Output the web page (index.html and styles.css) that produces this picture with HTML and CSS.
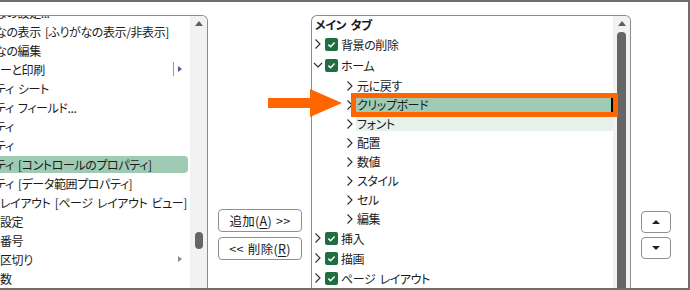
FILE: index.html
```html
<!DOCTYPE html>
<html lang="ja">
<head>
  <meta charset="UTF-8" />
  <title>リボンのユーザー設定</title>
  <link rel="stylesheet" href="styles.css">
</head>
<body>
  <div class="frame">
    <div class="listbox commands">
      <ul class="list">
        <li class="item cut">なの設定...</li>
        <li class="item cut">なの表示 [ふりがなの表示/非表示]</li>
        <li class="item cut">なの編集</li>
        <li class="item">ーと印刷<span class="sub-mark blue"></span></li>
        <li class="item cut">ティ シート</li>
        <li class="item cut">ティ フィールド...</li>
        <li class="item cut">ティ</li>
        <li class="item cut">ティ</li>
        <li class="item cut selected">ティ [コントロールのプロパティ]</li>
        <li class="item cut">ティ [データ範囲プロパティ]</li>
        <li class="item">レイアウト [ページ レイアウト ビュー]</li>
        <li class="item">設定</li>
        <li class="item">番号</li>
        <li class="item">区切り<span class="sub-mark"></span></li>
        <li class="item">数</li>
      </ul>
      <div class="scrollbar">
        <span class="scroll-up"></span>
        <span class="thumb small"></span>
      </div>
    </div>

    <div class="move-buttons">
      <button class="btn">追加(<u>A</u>) &gt;&gt;</button>
      <button class="btn">&lt;&lt; 削除(<u>R</u>)</button>
    </div>

    <div class="listbox tabs">
      <div class="tree">
        <div class="tree-head">メイン タブ</div>
        <div class="node">
          <svg class="chev" viewBox="0 0 10 12"><path d="M2.5 1.5L7 6L2.5 10.5"/></svg>
          <svg class="check" viewBox="0 0 13 13"><rect width="13" height="13" rx="2"/><path d="M3.4 6.6l2.2 2.1 4-4.1"/></svg>
          <span class="text">背景の削除</span>
        </div>
        <div class="node open">
          <svg class="chev" viewBox="0 0 10 12"><path d="M1 4L5 8L9 4"/></svg>
          <svg class="check" viewBox="0 0 13 13"><rect width="13" height="13" rx="2"/><path d="M3.4 6.6l2.2 2.1 4-4.1"/></svg>
          <span class="text">ホーム</span>
        </div>
        <div class="node sub">
          <svg class="chev" viewBox="0 0 10 12"><path d="M2.5 1.5L7 6L2.5 10.5"/></svg>
          <span class="label">元に戻す</span>
        </div>
        <div class="node sub">
          <svg class="chev" viewBox="0 0 10 12"><path d="M2.5 1.5L7 6L2.5 10.5"/></svg>
          <span class="label selected">クリップボード</span>
        </div>
        <div class="node sub">
          <svg class="chev" viewBox="0 0 10 12"><path d="M2.5 1.5L7 6L2.5 10.5"/></svg>
          <span class="label hover">フォント</span>
        </div>
        <div class="node sub">
          <svg class="chev" viewBox="0 0 10 12"><path d="M2.5 1.5L7 6L2.5 10.5"/></svg>
          <span class="label">配置</span>
        </div>
        <div class="node sub">
          <svg class="chev" viewBox="0 0 10 12"><path d="M2.5 1.5L7 6L2.5 10.5"/></svg>
          <span class="label">数値</span>
        </div>
        <div class="node sub">
          <svg class="chev" viewBox="0 0 10 12"><path d="M2.5 1.5L7 6L2.5 10.5"/></svg>
          <span class="label">スタイル</span>
        </div>
        <div class="node sub">
          <svg class="chev" viewBox="0 0 10 12"><path d="M2.5 1.5L7 6L2.5 10.5"/></svg>
          <span class="label">セル</span>
        </div>
        <div class="node sub">
          <svg class="chev" viewBox="0 0 10 12"><path d="M2.5 1.5L7 6L2.5 10.5"/></svg>
          <span class="label">編集</span>
        </div>
        <div class="node">
          <svg class="chev" viewBox="0 0 10 12"><path d="M2.5 1.5L7 6L2.5 10.5"/></svg>
          <svg class="check" viewBox="0 0 13 13"><rect width="13" height="13" rx="2"/><path d="M3.4 6.6l2.2 2.1 4-4.1"/></svg>
          <span class="text">挿入</span>
        </div>
        <div class="node">
          <svg class="chev" viewBox="0 0 10 12"><path d="M2.5 1.5L7 6L2.5 10.5"/></svg>
          <svg class="check" viewBox="0 0 13 13"><rect width="13" height="13" rx="2"/><path d="M3.4 6.6l2.2 2.1 4-4.1"/></svg>
          <span class="text">描画</span>
        </div>
        <div class="node">
          <svg class="chev" viewBox="0 0 10 12"><path d="M2.5 1.5L7 6L2.5 10.5"/></svg>
          <svg class="check" viewBox="0 0 13 13"><rect width="13" height="13" rx="2"/><path d="M3.4 6.6l2.2 2.1 4-4.1"/></svg>
          <span class="text">ページ レイアウト</span>
        </div>
      </div>
      <div class="scrollbar">
        <span class="scroll-up"></span>
        <span class="thumb long"></span>
      </div>
      <div class="callout"></div>
    </div>

    <div class="order-buttons">
      <button class="btn small"><span class="tri up"></span></button>
      <button class="btn small"><span class="tri down"></span></button>
    </div>

    <svg class="pointer" viewBox="0 0 75 30">
      <rect x="0" y="10" width="43" height="10"/>
      <polygon points="42,1 74,15 42,29"/>
    </svg>
  </div>
</body>
</html>
```

FILE: styles.css
```css
body {
  margin: 0;
  font-family: "Noto Sans CJK JP", sans-serif;
  font-size: 12px;
  letter-spacing: -0.4px;
  word-spacing: 2px;
  font-feature-settings: "palt";
  color: #1b1b1b;
  background: #fff;
}

.frame {
  position: relative;
  display: flex;
  width: 690px;
  height: 290px;
  box-sizing: border-box;
  padding-top: 13px;
  border-top: 2px solid #6e6e6e;
  border-right: 2px solid #6e6e6e;
  border-bottom: 2px solid #6e6e6e;
  overflow: hidden;
}

.listbox {
  position: relative;
  display: flex;
  overflow: hidden;
  border-top: 1px solid #8c8c8c;
  border-right: 1px solid #8c8c8c;
}

/* left list of commands */
.commands {
  width: 207px;
  border-top-right-radius: 6px;
}

.list {
  flex: 1;
  display: flex;
  flex-direction: column;
  margin: -13px 0 0;
  padding: 0;
  list-style: none;
  white-space: nowrap;
  overflow: hidden;
}

.item {
  position: relative;
  flex: none;
  height: 17px;
  line-height: 17px;
  margin: 1px 2px 1px 0;
  border-radius: 0 4px 4px 0;
}

.item.cut {
  text-indent: -5px;
}

.item.selected {
  background: #9fcbb4;
}

.sub-mark {
  position: absolute;
  right: 6px;
  top: 5px;
  width: 0;
  height: 0;
  border-top: 3.5px solid transparent;
  border-bottom: 3.5px solid transparent;
  border-left: 4px solid #8a8a8a;
}

.sub-mark.blue {
  border-left-color: #4b5a9e;
}

.sub-mark.blue::before {
  content: "";
  position: absolute;
  left: -9px;
  top: -7px;
  width: 1px;
  height: 14px;
  background: #9a9a9a;
}

.scrollbar {
  flex: none;
  display: flex;
  flex-direction: column;
  align-items: center;
  width: 17px;
  background: #f2f2f2;
}

.scroll-up {
  margin-top: 5px;
  width: 0;
  height: 0;
  border-left: 4px solid transparent;
  border-right: 4px solid transparent;
  border-bottom: 5px solid #5f5f5f;
}

.thumb {
  width: 8px;
  background: #666;
  border-radius: 4px;
}

.thumb.small {
  height: 17px;
  margin-top: 206px;
}

.thumb.long {
  flex: 1;
  width: 9px;
  margin-top: 6px;
  margin-left: -1px;
  border-radius: 4px 4px 0 0;
}

/* add / remove buttons */
.move-buttons {
  display: flex;
  flex-direction: column;
  gap: 5px;
  width: 84px;
  margin: 194px 9px 0 10px;
}

.btn {
  height: 23px;
  padding: 0;
  font-family: inherit;
  font-size: 12.5px;
  letter-spacing: 0.3px;
  word-spacing: 1px;
  font-feature-settings: "palt";
  color: #1b1b1b;
  background: #fff;
  border: 1px solid #8f8f8f;
  border-radius: 4px;
}

.btn u {
  text-underline-offset: 2px;
}

/* right tree of tabs */
.tabs {
  width: 318px;
  border-left: 1px solid #8c8c8c;
  border-radius: 6px 6px 0 0;
}

.tree {
  flex: 1;
  padding-left: 1px;
  white-space: nowrap;
}

.tree-head {
  height: 18px;
  line-height: 18px;
  padding-left: 2px;
  font-weight: bold;
}

.node {
  display: flex;
  align-items: center;
  height: 20px;
}

.node.open {
  height: 22px;
}

.node.sub {
  height: 19px;
  padding-left: 32px;
}

.chev {
  flex: none;
  width: 10px;
  height: 12px;
  fill: none;
  stroke: #2a2a2a;
  stroke-width: 1.1;
}

.check {
  flex: none;
  width: 13px;
  height: 13px;
  margin-left: 2px;
  fill: #1e6e42;
}

.check path {
  fill: none;
  stroke: #fff;
  stroke-width: 1.5;
}

.text {
  margin-left: 3px;
}

.label {
  flex: 1;
  align-self: stretch;
  line-height: 19px;
  margin-left: 1px;
  padding-left: 1px;
}

.label.selected {
  background: #9fcbb4;
  border-right: 2px solid #000;
}

.label.hover {
  background: #e7f2eb;
  border-bottom-right-radius: 3px;
  height: 17px;
}

.callout {
  position: absolute;
  left: 39px;
  top: 77px;
  width: 267px;
  height: 24px;
  box-sizing: border-box;
  border: 5px solid #ff6600;
}

/* move up / down buttons */
.order-buttons {
  display: flex;
  flex-direction: column;
  gap: 4px;
  width: 30px;
  margin: 196px 0 0 10px;
}

.btn.small {
  height: 22px;
  display: flex;
  align-items: center;
  justify-content: center;
}

.tri {
  width: 0;
  height: 0;
  border-left: 4px solid transparent;
  border-right: 4px solid transparent;
}

.tri.up {
  border-bottom: 4px solid #222;
}

.tri.down {
  border-top: 4px solid #222;
}

.pointer {
  position: absolute;
  left: 268px;
  top: 86px;
  width: 75px;
  height: 30px;
  fill: #ff6600;
}
```
